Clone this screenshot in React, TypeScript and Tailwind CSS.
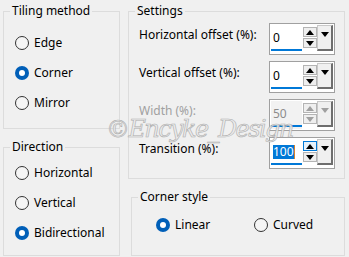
import React from 'react';

const Radio: React.FC<{ checked?: boolean }> = ({ checked }) =>
  checked ? (
    <span className="w-[14px] h-[14px] shrink-0 rounded-full bg-[#005fb8] flex items-center justify-center">
      <span className="w-[6px] h-[6px] rounded-full bg-white" />
    </span>
  ) : (
    <span className="w-[14px] h-[14px] shrink-0 rounded-full border border-[#333333] bg-[#f5f5f5]" />
  );

const RadioRow: React.FC<{ label: string; checked?: boolean }> = ({ label, checked }) => (
  <div className="h-[30px] flex items-center gap-[5px] pl-[5px]">
    <Radio checked={checked} />
    <span>{label}</span>
  </div>
);

const UpArrow: React.FC<{ color: string }> = ({ color }) => (
  <svg width="8" height="5" viewBox="0 0 8 5">
    <polygon points="0,5 8,5 4,0" fill={color} />
  </svg>
);

const DownArrow: React.FC<{ color: string }> = ({ color }) => (
  <svg width="8" height="5" viewBox="0 0 8 5">
    <polygon points="0,0 8,0 4,5" fill={color} />
  </svg>
);

type SpinProps = { value: string; disabled?: boolean; selected?: boolean };

const SpinBox: React.FC<SpinProps> = ({ value, disabled, selected }) => {
  const arrow = disabled ? '#a0a0a0' : '#000000';
  return (
    <div className="w-[66px] h-[32px] border border-[#a0a0a0] bg-white flex p-[1px] shrink-0">
      <div className={`w-[32px] flex flex-col ${disabled ? 'bg-[#f2f2f2]' : 'bg-white'}`}>
        <div className="flex-1 flex items-center pl-[2px] pt-[1px]">
          {selected ? (
            <>
              <span className="bg-[#0078d7] text-white leading-[14px]">{value}</span>
              <span className="w-[1px] h-[14px] bg-[#d9822b]" />
            </>
          ) : (
            <span className={disabled ? 'text-[#8c8c8c]' : 'text-black'}>{value}</span>
          )}
        </div>
        <div className="h-[2px] bg-[#0078d7] mb-[2px]" />
      </div>
      <div className="ml-[1px] pt-[2px] flex flex-col gap-[1px]">
        <div
          className={`w-[14px] h-[10px] border flex items-center justify-center ${
            selected ? 'border-[#0078d7] bg-[#e5f1fb]' : 'border-[#b4b4b4] bg-[#efefef]'
          }`}
        >
          <UpArrow color={arrow} />
        </div>
        <div className="w-[14px] h-[10px] border border-[#b4b4b4] bg-[#efefef] flex items-center justify-center">
          <DownArrow color={arrow} />
        </div>
      </div>
      <div className="w-[16px] h-[26px] border-t border-l border-[#c8c8c8] border-r-2 border-b-2 border-r-[#6e6e6e] border-b-[#6e6e6e] bg-[#f0f0f0] flex justify-center pt-[6px]">
        <DownArrow color={arrow} />
      </div>
    </div>
  );
};

const SettingRow: React.FC<{ label: string } & SpinProps> = ({ label, ...spin }) => (
  <div className="flex items-start justify-between pl-[4px] pr-[3px]">
    <span className={`pt-[4px] leading-[16px] ${spin.disabled ? 'text-[#a0a0a0]' : 'text-black'}`}>{label}</span>
    <SpinBox {...spin} />
  </div>
);

const App: React.FC = () => {
  return (
    <div className="relative w-[349px] h-[257px] overflow-hidden bg-[#f0f0f0] text-black text-[12px] leading-[16px] font-['Noto_Sans',sans-serif] flex">
      {/* left column */}
      <div className="pl-[3px] pt-[3px] w-[120px] flex flex-col gap-[10px]">
        <fieldset className="w-[117px] h-[126px] border border-[#dcdcdc] px-[6px]">
          <legend className="px-[2px] leading-[16px]">Tiling method</legend>
          <div className="pt-[9px]">
            <RadioRow label="Edge" />
            <RadioRow label="Corner" checked />
            <RadioRow label="Mirror" />
          </div>
        </fieldset>
        <fieldset className="w-[117px] h-[117px] border border-[#dcdcdc] px-[6px]">
          <legend className="px-[2px] leading-[16px]">Direction</legend>
          <div className="pt-[3px]">
            <RadioRow label="Horizontal" />
            <RadioRow label="Vertical" />
            <RadioRow label="Bidirectional" checked />
          </div>
        </fieldset>
      </div>

      {/* right column */}
      <div className="ml-[8px] pt-[3px] w-[217px] flex flex-col">
        <fieldset className="w-[217px] h-[176px] border border-[#dcdcdc] px-[6px]">
          <legend className="px-[2px] leading-[16px]">Settings</legend>
          <div className="pt-[4px] flex flex-col gap-[6px]">
            <SettingRow label="Horizontal offset (%):" value="0" />
            <SettingRow label="Vertical offset (%):" value="0" />
            <SettingRow label="Width (%):" value="50" disabled />
            <SettingRow label="Transition (%):" value="100" selected />
          </div>
        </fieldset>
        <fieldset className="ml-[3px] mt-[10px] w-[214px] h-[67px] border border-[#dcdcdc] px-[6px]">
          <legend className="px-[2px] leading-[16px]">Corner style</legend>
          <div className="pt-[5px] flex">
            <div className="w-[116px] h-[30px] flex items-center gap-[5px] pl-[18px]">
              <Radio checked />
              <span>Linear</span>
            </div>
            <div className="h-[30px] flex items-center gap-[5px]">
              <Radio />
              <span>Curved</span>
            </div>
          </div>
        </fieldset>
      </div>

      {/* watermark */}
      <div className="absolute left-[106px] top-[114px] pointer-events-none italic text-[24px] leading-[30px] tracking-[-1.6px] font-['DejaVu_Serif',serif] text-[#ececec] [-webkit-text-stroke:0.6px_#a6a6a6] opacity-90">
        ©Encyke_Design
      </div>
    </div>
  );
};

export default App;
